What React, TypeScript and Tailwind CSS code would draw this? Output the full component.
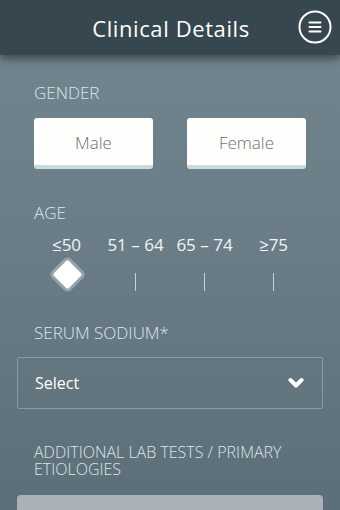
import React from 'react';

const font = { fontFamily: '"Open Sans", "Noto Sans", sans-serif' };

function MenuIcon() {
  return (
    <svg width="34" height="34" viewBox="0 0 34 34" fill="none">
      <circle cx="17" cy="17" r="15.5" stroke="white" strokeWidth="2" />
      <path d="M11.5 12.5h11M11.5 17h11M11.5 21.5h11" stroke="white" strokeWidth="2" strokeLinecap="round" />
    </svg>
  );
}

export default function App() {
  const ages = ['≤50', '51 – 64', '65 – 74', '≥75'];

  return (
    <div
      className="w-[340px] h-[510px] overflow-hidden bg-gradient-to-b from-[#728690] via-[#6a7d87] to-[#5c6e77] text-[#dde6ea]"
      style={font}
    >
      {/* header */}
      <header className="relative h-[55px] bg-[#37474f] flex items-center justify-center shadow-[0_4px_8px_rgba(0,0,0,0.45)]">
        <h1 className="text-[22px] tracking-[0.6px] text-white pl-[2px] pt-[2px]">Clinical Details</h1>
        <button className="absolute right-[8px] top-[10px]">
          <MenuIcon />
        </button>
      </header>

      <section className="px-[34px] pt-[28px]">
        <p className="text-[17px] leading-[20px] font-light">GENDER</p>
        <div className="flex justify-between mt-[15px]">
          <button className="w-[119px] h-[51px] bg-[#fefefd] rounded-[3px] border-b-[4px] border-[#c9dcdd] text-[17px] font-light text-[#6f6f6f] pt-[3px]">
            Male
          </button>
          <button className="w-[119px] h-[51px] bg-[#fefefd] rounded-[3px] border-b-[4px] border-[#c9dcdd] text-[17px] font-light text-[#6f6f6f] pt-[3px]">
            Female
          </button>
        </div>

        <p className="text-[17px] leading-[20px] font-light mt-[34px]">AGE</p>
        <div className="grid grid-cols-4 w-[276px] -ml-[2px] mt-[10px]">
          {ages.map((a) => (
            <span key={a} className="text-center text-[17px] leading-[24px] text-[#f2f5f6] whitespace-nowrap">
              {a}
            </span>
          ))}
        </div>
        <div className="grid grid-cols-4 w-[276px] -ml-[2px] h-[30px] mt-[5px]">
          {ages.map((a, i) => (
            <div key={a} className="flex items-center justify-center">
              {i === 0 ? (
                <div className="w-[21px] h-[21px] ml-[2px] mb-[6px] rotate-45 bg-white rounded-[2px] shadow-[0_0_0_3px_rgba(255,255,255,0.3)]" />
              ) : (
                <div className="w-[1px] h-[18px] bg-[#c8d3d8] mt-[10px]" />
              )}
            </div>
          ))}
        </div>

        <p className="text-[17px] leading-[20px] font-light mt-[31px]">SERUM SODIUM*</p>
      </section>

      <div className="mx-[17px] mt-[14px] h-[52px] border border-[#8a9aa2] rounded-[2px] flex items-center justify-between pl-[17px] pr-[18px]">
        <span className="text-[16px] text-white">Select</span>
        <svg width="16" height="12" viewBox="0 0 16 12">
          <path d="M2.5 3l5.5 5.5 5.5-5.5" stroke="white" strokeWidth="4" fill="none" strokeLinecap="round" strokeLinejoin="round" />
        </svg>
      </div>

      <div className="px-[34px] mt-[35px] text-[16px] leading-[17px] font-light">
        <p>ADDITIONAL LAB TESTS / PRIMARY</p>
        <p>ETIOLOGIES</p>
      </div>

      <div className="mx-[17px] mt-[17px] h-[40px] bg-[#a9b3b7] rounded-[4px]" />
    </div>
  );
}
